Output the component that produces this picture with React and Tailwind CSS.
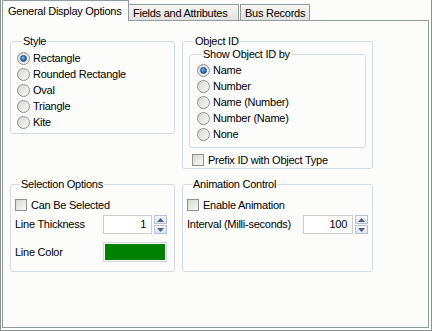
const font = { fontFamily: '"Liberation Sans", Arial, sans-serif' };

const Radio = ({ label, checked }) => (
  <div className="flex items-center h-[16px] gap-[3px]">
    <span className="relative w-[13px] h-[13px] rounded-full border border-[#8e8f8f] bg-gradient-to-br from-[#d6d6d2] to-[#fafaf8] flex items-center justify-center">
      {checked && <span className="w-[7px] h-[7px] rounded-full bg-[radial-gradient(circle_at_40%_35%,#7fb6ea,#1f5fa8_70%)] border border-[#174f8e]" />}
    </span>
    <span>{label}</span>
  </div>
);

const Check = ({ label }) => (
  <div className="flex items-center h-[16px] gap-[4px]">
    <span className="w-[12px] h-[12px] border border-[#8e8f8f] bg-gradient-to-br from-[#d8d8d4] to-[#f8f8f6]" />
    <span>{label}</span>
  </div>
);

const Spin = ({ value, width }) => (
  <div className="flex items-center gap-[2px]">
    <div className={`${width} h-[19px] border border-[#cdcdcd] bg-white text-right pr-[5px] leading-[17px]`}>{value}</div>
    <div className="flex flex-col gap-[1px]">
      <span className="w-[13px] h-[9px] border border-[#b7c3d3] bg-gradient-to-b from-[#f4f6f9] to-[#dde4ee] flex items-center justify-center">
        <svg width="7" height="4" viewBox="0 0 7 4"><path d="M0 4 L3.5 0 L7 4 Z" fill="#4d6185" /></svg>
      </span>
      <span className="w-[13px] h-[9px] border border-[#b7c3d3] bg-gradient-to-b from-[#f4f6f9] to-[#dde4ee] flex items-center justify-center">
        <svg width="7" height="4" viewBox="0 0 7 4"><path d="M0 0 L3.5 4 L7 0 Z" fill="#4d6185" /></svg>
      </span>
    </div>
  </div>
);

const Group = ({ title, className, children }) => (
  <fieldset className={`border border-[#d3dbe1] rounded-[3px] ${className}`}>
    <legend className="ml-[5px] px-[1px] leading-[13px]">{title}</legend>
    {children}
  </fieldset>
);

export default function App() {
  return (
    <div style={font} className="w-[432px] h-[331px] bg-[#fcfcfa] text-[11px] tracking-[-0.25px] text-black border-l border-r border-b border-[#8f9192] pl-[1px] pr-[2px] pb-[2px]">
      <div className="flex flex-col h-full">
        <div className="flex items-end h-[21px] -mb-[1px] relative z-10">
          <div className="h-[21px] w-[127px] border border-b-0 border-[#919b9c] bg-[#fcfcfa] pl-[5px] pt-[2px]">General Display Options</div>
          <div className="h-[17px] w-[110px] border border-l-0 border-[#919b9c] bg-gradient-to-b from-[#f6f6f4] to-[#e2e2de] pl-[4px] leading-[16px]">Fields and Attributes</div>
          <div className="h-[17px] w-[70px] ml-[1px] border border-[#919b9c] bg-gradient-to-b from-[#f6f6f4] to-[#e2e2de] pl-[4px] leading-[16px]">Bus Records</div>
        </div>
        <div className="flex-1 border border-[#919b9c] bg-[#fcfcfa] pl-[7px] pt-[14px]">
          <div className="grid grid-cols-[165px_191px] gap-x-[7px] gap-y-[9px] items-start">
            <Group title="Style" className="h-[99px] pl-[6px] pt-[2px]">
              <Radio label="Rectangle" checked />
              <Radio label="Rounded Rectangle" />
              <Radio label="Oval" />
              <Radio label="Triangle" />
              <Radio label="Kite" />
            </Group>
            <Group title="Object ID" className="h-[134px] px-[6px]">
              <Group title="Show Object ID by" className="h-[100px] pl-[7px] pt-[1px]">
                <Radio label="Name" checked />
                <Radio label="Number" />
                <Radio label="Name (Number)" />
                <Radio label="Number (Name)" />
                <Radio label="None" />
              </Group>
              <div className="pl-[3px] pt-[4px]">
                <Check label="Prefix ID with Object Type" />
              </div>
            </Group>
            <Group title="Selection Options" className="h-[94px] pl-[4px] pr-[7px] pt-[6px]">
              <Check label="Can Be Selected" />
              <div className="flex items-center justify-between mt-[2px]">
                <span>Line Thickness</span>
                <Spin value="1" width="w-[49px]" />
              </div>
              <div className="flex items-center justify-between mt-[8px]">
                <span>Line Color</span>
                <div className="w-[64px] h-[20px] border border-[#d6d6d6] bg-white p-[1px]">
                  <div className="w-full h-full bg-[#008000]" />
                </div>
              </div>
            </Group>
            <Group title="Animation Control" className="h-[94px] pl-[4px] pr-[4px] pt-[6px]">
              <Check label="Enable Animation" />
              <div className="flex items-center justify-between mt-[2px]">
                <span>Interval (Milli-seconds)</span>
                <Spin value="100" width="w-[50px]" />
              </div>
            </Group>
          </div>
        </div>
      </div>
    </div>
  );
}
